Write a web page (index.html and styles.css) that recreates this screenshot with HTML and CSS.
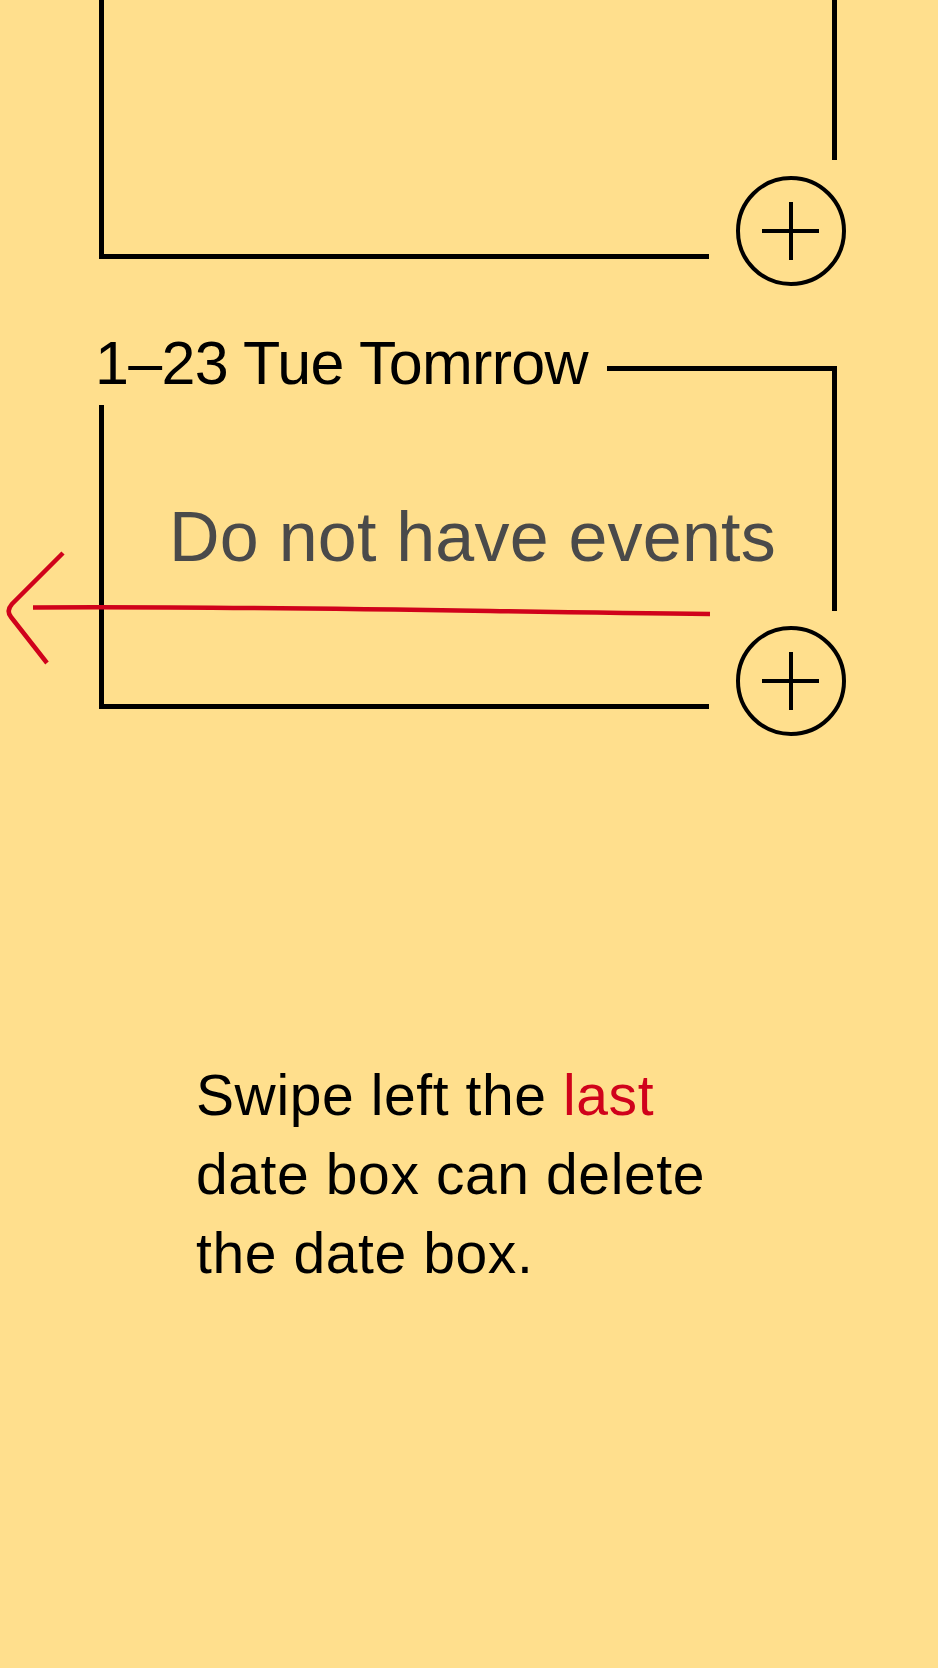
FILE: index.html
```html
<!DOCTYPE html>
<html lang="en">
<head>
<meta charset="utf-8">
<title>Swipe to delete date box</title>
<link rel="stylesheet" href="styles.css">
</head>
<body>
<main class="page">
  <section class="day day-first">
    <button class="add add-first" aria-label="Add event">
      <svg viewBox="0 0 110 110" width="110" height="110"><circle cx="55" cy="55" r="53" fill="none" stroke="#000" stroke-width="4"/><path d="M26 55H83M55 26V84" stroke="#000" stroke-width="4" fill="none"/></svg>
    </button>
  </section>

  <section class="day day-second">
    <header class="day-head">
      <h2 class="day-title">1–23 Tue Tomrrow</h2>
      <span class="head-rule"></span>
    </header>
    <div class="day-body">
      <p class="empty">Do not have events</p>
    </div>
    <button class="add add-second" aria-label="Add event">
      <svg viewBox="0 0 110 110" width="110" height="110"><circle cx="55" cy="55" r="53" fill="none" stroke="#000" stroke-width="4"/><path d="M26 55H83M55 26V84" stroke="#000" stroke-width="4" fill="none"/></svg>
    </button>
  </section>

  <p class="hint">Swipe left the <span class="accent">last</span><br>date box can delete<br>the date box.</p>

  <svg class="swipe" viewBox="0 0 720 120" width="720" height="120" aria-hidden="true">
    <path d="M33 67.5C250 66 450 71 710 74" fill="none" stroke="#d0021b" stroke-width="4.5"/>
    <path d="M63 13L12 64Q6 71 11 77L47 123" fill="none" stroke="#d0021b" stroke-width="4.5"/>
  </svg>
</main>
</body>
</html>
```
FILE: styles.css
```css
html, body {
  margin: 0;
  padding: 0;
}
body {
  background: #ffdf8d;
  font-family: "Liberation Sans", Arial, sans-serif;
  color: #000;
}
.page {
  position: relative;
  width: 938px;
  height: 1668px;
  overflow: hidden;
}
.day {
  position: relative;
  margin-left: 99px;
  width: 738px;
  box-sizing: border-box;
}
.day-first {
  height: 259px;
  border-left: 5px solid #000;
  background:
    linear-gradient(#000, #000) left bottom / 605px 5px no-repeat,
    linear-gradient(#000, #000) right top / 5px 160px no-repeat;
}
.day-second {
  margin-top: 107px;
}
.day-head {
  display: flex;
  align-items: flex-start;
  height: 39px;
}
.day-title {
  margin: -33px 0 0 -4px;
  font-size: 61px;
  line-height: 61px;
  font-weight: 400;
  letter-spacing: -0.7px;
  white-space: nowrap;
  flex: 1;
}
.head-rule {
  flex: none;
  width: 230px;
  height: 245px;
  box-sizing: border-box;
  border-top: 5px solid #000;
  border-right: 5px solid #000;
}
.day-body {
  height: 304px;
  box-sizing: border-box;
  border-left: 5px solid #000;
  padding-top: 97px;
  background: linear-gradient(#000, #000) left bottom / 605px 5px no-repeat;
}
.empty {
  margin: 0;
  font-size: 70px;
  line-height: 70px;
  color: #4a4a4a;
  text-align: center;
  padding-left: 4px;
  letter-spacing: 0.2px;
  white-space: nowrap;
}
.add {
  position: absolute;
  left: 637px;
  top: 176px;
  width: 110px;
  height: 110px;
  padding: 0;
  border: 0;
  background: transparent;
}
.add svg {
  display: block;
}
.add-first {
  left: 632px;
}
.add-second {
  top: 260px;
}
.hint {
  margin: 347px 0 0 196px;
  font-size: 57px;
  line-height: 79px;
  font-weight: 400;
  letter-spacing: 0.6px;
}
.accent {
  color: #d0021b;
}
.swipe {
  position: absolute;
  left: 0;
  top: 540px;
  overflow: visible;
}
```
